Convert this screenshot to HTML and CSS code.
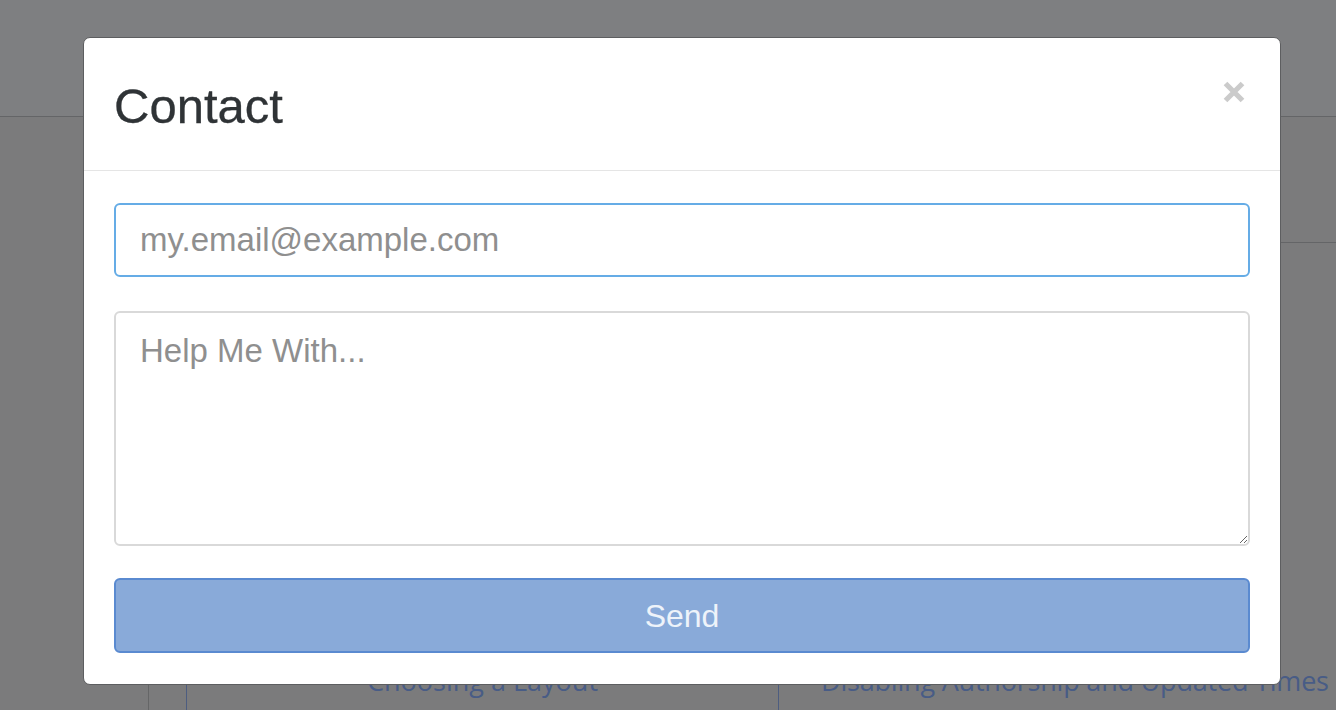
FILE: index.html
```html
<!DOCTYPE html>
<html lang="en">
<head>
<meta charset="utf-8">
<title>Contact</title>
<link rel="stylesheet" href="styles.css">
</head>
<body>
<div class="page">
  <header class="topbar"></header>
  <div class="subbar"><div class="subbar-line"></div></div>
  <div class="spacer"></div>
  <section class="cards">
    <div class="gutter"></div>
    <div class="card first"><a class="card-title" href="#">Choosing a Layout</a></div>
    <div class="card second"><a class="card-title" href="#">Disabling Authorship and Updated Times</a></div>
  </section>
</div>

<div class="modal" role="dialog" aria-labelledby="modal-title">
  <div class="modal-header">
    <h4 class="modal-title" id="modal-title">Contact</h4>
    <button class="close" type="button" aria-label="Close">
      <svg width="24" height="24" viewBox="0 0 24 24"><path d="M3.5 3.5 L20.5 20.5 M20.5 3.5 L3.5 20.5" stroke="#cbcbcb" stroke-width="5.2" stroke-linecap="butt" fill="none"/></svg>
    </button>
  </div>
  <form class="modal-body">
    <input class="field email" type="email" placeholder="my.email@example.com">
    <textarea class="field message" placeholder="Help Me With..."></textarea>
    <button class="send" type="button">Send</button>
  </form>
</div>
</body>
</html>
```
FILE: styles.css
```css
* { box-sizing: border-box; }
html, body { margin: 0; padding: 0; }
body {
  width: 1336px;
  height: 710px;
  overflow: hidden;
  background: #7b7b7c;
  font-family: "Liberation Sans", Arial, sans-serif;
}
.page { display: flex; flex-direction: column; height: 710px; }
.topbar {
  height: 117px;
  flex: none;
  background: #7e7f81;
  border-bottom: 1px solid #646567;
}
.subbar { height: 126px; flex: none; display: flex; justify-content: flex-end; }
.subbar-line { width: 1200px; border-bottom: 1px solid #646567; }
.spacer { flex: 1; }
.cards {
  flex: none;
  height: 62px;
  display: flex;
}
.gutter { width: 148px; flex: none; }
.card {
  border-left: 1px solid #656667;
  display: flex;
  justify-content: center;
}
.card.first { width: 630px; padding-left: 37px; }
.card.first .card-title { width: 593px; border-left: 1px solid #4d5d80; text-align: center; }
.card.second {
  flex: 1;
  min-width: 0;
  justify-content: flex-start;
  padding-left: 42px;
  border-left-color: #4d5d80;
  white-space: nowrap;
  overflow: hidden;
}
.card-title {
  font-family: "Open Sans", sans-serif;
  font-size: 27px;
  color: #485c86;
  text-decoration: none;
  line-height: 1;
  padding-top: 19px;
}
.card.second .card-title { letter-spacing: -0.2px; }

.modal {
  position: absolute;
  left: 83px;
  top: 37px;
  width: 1198px;
  height: 648px;
  background: #fff;
  border: 1px solid #5d5e60;
  border-radius: 7px;
  display: flex;
  flex-direction: column;
}
.modal-header {
  height: 133px;
  flex: none;
  border-bottom: 1px solid #e5e5e5;
  display: flex;
  align-items: flex-start;
  justify-content: space-between;
  padding: 0 34px 0 30px;
}
.modal-title {
  margin: 0;
  padding-top: 42px;
  font-size: 49px;
  font-weight: 400;
  line-height: 52px;
  color: #2f3336;
  -webkit-text-stroke: 0.3px #2f3336;
}
.close {
  margin-top: 42px;
  padding: 0;
  border: 0;
  background: none;
  width: 24px;
  height: 24px;
  cursor: pointer;
}
.close svg { display: block; }
.modal-body {
  flex: 1;
  margin: 0;
  padding: 32px 30px 31px;
  display: flex;
  flex-direction: column;
}
.field {
  display: block;
  width: 100%;
  font-family: "Liberation Sans", Arial, sans-serif;
  font-size: 33px;
  color: #333;
  background: #fff;
  border: 2px solid #d9d9d9;
  border-radius: 6px;
  padding: 0 24px;
  outline: none;
}
.field::placeholder { color: #8f8f8f; opacity: 1; }
.email {
  height: 74px;
  border-color: #65ace6;
  margin-bottom: 34px;
}
.message {
  height: 235px;
  padding-top: 18px;
  resize: vertical;
  margin-bottom: 32px;
  line-height: 1.2;
}
.send {
  height: 75px;
  width: 100%;
  background: #89aad9;
  border: 2px solid #5a8ad0;
  border-radius: 6px;
  color: #eef3fa;
  font-family: "Liberation Sans", Arial, sans-serif;
  font-size: 32px;
  padding: 2px 0 0;
}
```
